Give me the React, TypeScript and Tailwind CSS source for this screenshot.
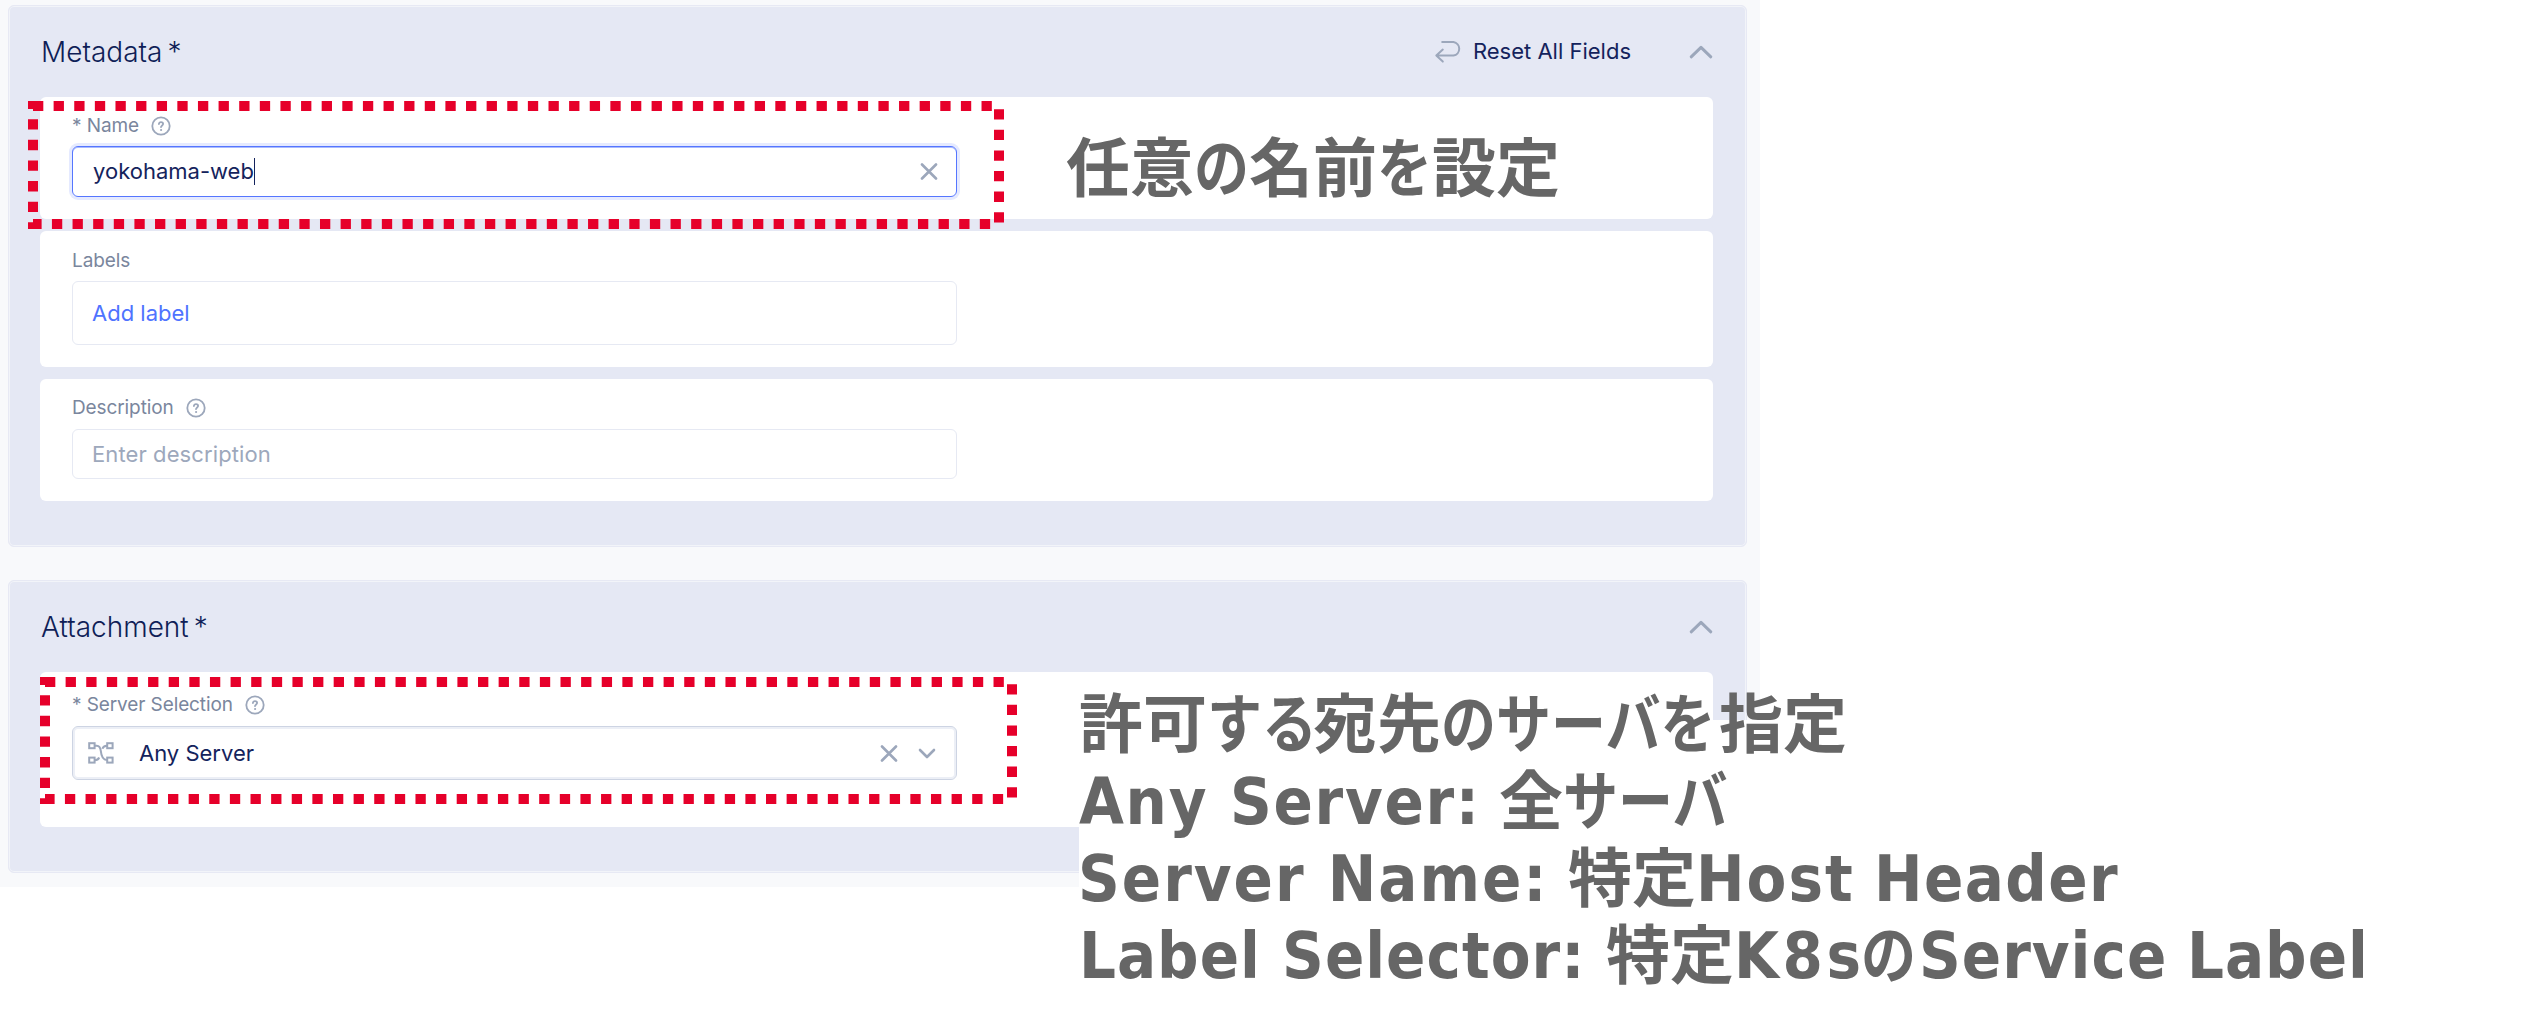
import React from "react";

function Help() {
  return (
    <svg className="h-5 w-5 text-[#9ca7bb]" viewBox="0 0 20 20" fill="none" stroke="currentColor" strokeWidth="1.8" strokeLinecap="round">
      <circle cx="10" cy="10" r="8.7" />
      <path d="M7.9 8.1c0-1.2 1-2 2.1-2s2.1.8 2.1 1.9c0 1.4-1.9 1.5-2.1 3.2" />
      <circle cx="10" cy="14" r="0.55" fill="currentColor" strokeWidth="1" />
    </svg>
  );
}

function ChevronUp() {
  return (
    <svg className="h-[14px] w-6 text-[#9ca7bb]" viewBox="0 0 24 14" fill="none" stroke="currentColor" strokeWidth="3" strokeLinecap="round" strokeLinejoin="round">
      <path d="M2.2 11.8 12 2.4l9.8 9.4" />
    </svg>
  );
}

function Cross() {
  return (
    <svg className="h-[17px] w-[18px] text-[#9ca7bb]" viewBox="0 0 18 17" fill="none" stroke="currentColor" strokeWidth="2.6" strokeLinecap="round">
      <path d="M2 1.5 16 15.5M16 1.5 2 15.5" />
    </svg>
  );
}

function ResetArrow() {
  return (
    <svg className="h-6 w-7 text-[#9ca7bb]" viewBox="0 0 28 24" fill="none" stroke="currentColor" strokeWidth="2" strokeLinecap="round" strokeLinejoin="round">
      <path d="M8.2 2H19.5a6.9 6.9 0 0 1 0 13.6H2.3M8.8 9.6 2.3 15.6 8.8 21.6" />
    </svg>
  );
}

function Nodes() {
  return (
    <svg className="h-[22px] w-[26px] text-[#9ca7bb]" viewBox="0 0 26 22" fill="none" stroke="currentColor" strokeWidth="2">
      <rect x="1.2" y="1.2" width="5.4" height="5" />
      <rect x="19.2" y="1.2" width="5.4" height="5" />
      <rect x="1.2" y="15.6" width="5.4" height="5" />
      <rect x="19.2" y="15.6" width="5.4" height="5" />
      <path d="M6.8 3.7h2c2.600 0 3.600 2 4 5.200.5 5 1.500 9 6 9.200M19 3.700c-2.400.2-4 1-4.600 3M6.800 18.200c2.400 0 3.600-.8 4.400-2.700" />
    </svg>
  );
}

function Section({ title, actions, className, children }: { title: string; actions?: React.ReactNode; className: string; children: React.ReactNode }) {
  return (
    <section className={`rounded-md border border-[#e7e9f4] bg-[#e5e8f4] px-[32px] shadow-[inset_0_0_0_1px_#f2f4f9] ${className}`}>
      <header className="flex h-[91px] items-center pr-px">
        <h2 className="flex gap-1.5 text-[28px] font-[360] text-[#0f1e57]">
          {title}
          <span className="-ml-px">*</span>
        </h2>
        <div className="ml-auto flex items-center">
          {actions}
          <ChevronUp />
        </div>
      </header>
      {children}
    </section>
  );
}

function Label({ children, help }: { children: React.ReactNode; help?: boolean }) {
  return (
    <div className="flex h-5 items-center gap-3 text-[19px] leading-5 font-[380] tracking-[-0.1px] whitespace-nowrap text-[#7a869d]">
      <span>{children}</span>
      {help && <Help />}
    </div>
  );
}

function Kana({ children, className }: { children: string; className: string }) {
  return (
    <span className={`shrink-0 ${className}`}>
      <span className="inline-block origin-left scale-x-[0.86]">{children}</span>
    </span>
  );
}

function Kanji({ children }: { children: string }) {
  return <span className="shrink-0">{children}</span>;
}

function Latin({ children, className }: { children: string; className: string }) {
  return <span className={`shrink-0 font-['DejaVu_Sans_Condensed','DejaVu_Sans',sans-serif] text-[64.5px] ${className}`}>{children}</span>;
}

const line = "flex h-[77px] items-baseline";
const note = "absolute text-[64px] leading-[77px] font-bold whitespace-pre text-[#666] font-['Noto_Sans_CJK_JP',sans-serif]";

function Frame({ className, w, h }: { className: string; w: number; h: number }) {
  return (
    <svg className={`pointer-events-none absolute overflow-visible ${className}`} width={w} height={h}>
      <path d={`M0 0H${w}V${h}H0Z`} fill="none" stroke="#e6002a" strokeWidth="10" strokeDasharray="10.31 10.31" />
    </svg>
  );
}

export default function App() {
  return (
    <div className="relative h-[1030px] w-[2531px] overflow-hidden bg-white font-['Inter',sans-serif]">
      <main className="h-[887px] w-[1760px] bg-[#f8f9fb] pt-[5px] pl-2">
        <Section
          title="Metadata"
          className="h-[542px] w-[1739px]"
          actions={
            <button className="mr-[58px] flex items-center gap-[11px] text-[22px] font-[380] text-[#14235c]">
              <ResetArrow />
              Reset All Fields
            </button>
          }
        >
          <div className="h-[122px] w-[1673px] -ml-px rounded-md bg-white pt-[19px] pl-8">
            <Label help>* Name</Label>
            <div className="mt-[10px] flex h-[51px] w-[885px] items-center rounded-md border border-[#5576ff] pr-[18px] pl-5 text-[22px] font-[380] text-[#14235c] shadow-[0_0_0_3px_#e5eaff,inset_0_1px_0_#a9bbff]">
              yokohama-web
              <span className="h-[27px] w-px bg-[#14235c]" />
              <span className="ml-auto">
                <Cross />
              </span>
            </div>
          </div>
          <div className="mt-3 h-[136px] w-[1673px] -ml-px rounded-md bg-white pt-5 pl-8">
            <Label>Labels</Label>
            <div className="mt-[10px] flex h-16 w-[885px] items-center rounded-md border border-[#e6e9f3] pl-[19px] text-[22px] font-[380] text-[#4f73ff]">Add label</div>
          </div>
          <div className="mt-3 h-[122px] w-[1673px] -ml-px rounded-md bg-white pt-[19px] pl-8">
            <Label help>Description</Label>
            <div className="mt-[11px] flex h-[50px] w-[885px] items-center rounded-md border border-[#e6e9f3] pl-[19px] text-[22px] font-[380] tracking-[0.1px] text-[#9da8bc]">Enter description</div>
          </div>
        </Section>

        <Section title="Attachment" className="mt-[33px] h-[293px] w-[1739px]">
          <div className="h-[155px] w-[1673px] -ml-px rounded-md bg-white pt-[23px] pl-8">
            <Label help>* Server Selection</Label>
            <div className="mt-[11px] flex h-[54px] w-[885px] items-center rounded-md border border-[#cdd4e3] pr-5 pl-[15px] text-[22px] font-[380] text-[#14235c] shadow-[inset_0_0_0_2px_#eceff6]">
              <Nodes />
              <span className="ml-[25px]">Any Server</span>
              <span className="ml-auto flex items-center gap-[20px]">
                <Cross />
                <svg className="h-[11px] w-[18px] text-[#9ca7bb]" viewBox="0 0 18 11" fill="none" stroke="currentColor" strokeWidth="2.6" strokeLinecap="round" strokeLinejoin="round">
                  <path d="M2 2l7 7 7-7" />
                </svg>
              </span>
            </div>
          </div>
        </Section>
      </main>

      <Frame className="top-[106px] left-[33px]" w={966} h={118} />
      <Frame className="top-[682px] left-[45px]" w={967} h={117} />

      <div className={`${note} top-[125px] left-[1066px]`}>
        <div className={line}>
          <Kanji>任意</Kanji>
          <Kana className="w-[55px]">の</Kana>
          <Kanji>名前</Kanji>
          <Kana className="w-[55px]">を</Kana>
          <Kanji>設定</Kanji>
        </div>
      </div>

      <div className="absolute top-[720px] left-[1079px] h-[310px] w-[1452px] bg-white" />
      <div className={`${note} top-[681px] left-[1079px]`}>
        <div className={line}>
          <Kanji>許可</Kanji>
          <Kana className="w-[106px]">する</Kana>
          <Kanji>宛先</Kanji>
          <Kana className="w-[278px]">のサーバを</Kana>
          <Kanji>指定</Kanji>
        </div>
        <div className={line}>
          <Latin className="w-[420px] tracking-[1.7px]">Any Server:</Latin>
          <Kanji>全</Kanji>
          <Kana className="w-[165px]">サーバ</Kana>
        </div>
        <div className={line}>
          <Latin className="-ml-px w-[490px] tracking-[2px]">Server Name:</Latin>
          <Kanji>特定</Kanji>
          <Latin className="w-[178px] tracking-[2px]">Host</Latin>
          <Latin className="tracking-[1.400px]">Header</Latin>
        </div>
        <div className={line}>
          <Latin className="w-[527px] tracking-[1px]">Label Selector:</Latin>
          <Kanji>特定</Kanji>
          <Latin className="w-[127px] tracking-[3.600px]">K8s</Latin>
          <Kana className="w-[58px]">の</Kana>
          <Latin className="w-[268px] tracking-[1px]">Service</Latin>
          <Latin className="tracking-[1px]">Label</Latin>
        </div>
      </div>
    </div>
  );
}
